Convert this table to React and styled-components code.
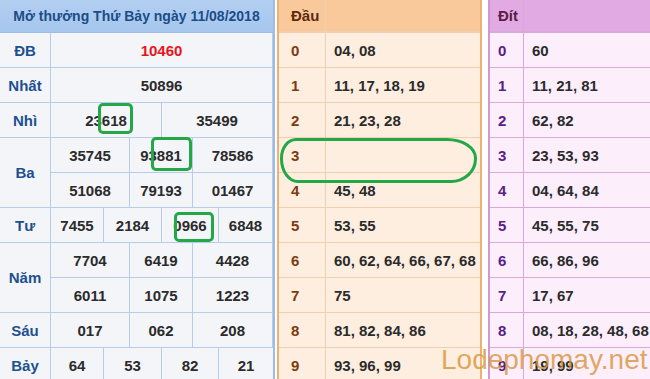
import React from 'react';
import styled, { createGlobalStyle } from 'styled-components';

const GlobalStyle = createGlobalStyle`
  html, body {
    margin: 0;
    padding: 0;
    background: #fff;
  }
  body {
    font-family: "Liberation Sans", Arial, sans-serif;
  }
`;

const prizes = [
  { label: 'ĐB', lines: [['10460']], red: true },
  { label: 'Nhất', lines: [['50896']] },
  { label: 'Nhì', lines: [['23618', '35499']] },
  { label: 'Ba', lines: [['35745', '93881', '78586'], ['51068', '79193', '01467']] },
  { label: 'Tư', lines: [['7455', '2184', '0966', '6848']] },
  { label: 'Năm', lines: [['7704', '6419', '4428'], ['6011', '1075', '1223']] },
  { label: 'Sáu', lines: [['017', '062', '208']] },
  { label: 'Bảy', lines: [['64', '53', '82', '21']] },
];

const spans = {
  1: ['2 / 8'],
  2: ['2 / 5', '5 / 8'],
  3: ['2 / 4', '4 / 6', '6 / 8'],
  4: ['2 / 3', '3 / 5', '5 / 7', '7 / 8'],
};

const dau = ['04, 08', '11, 17, 18, 19', '21, 23, 28', '', '45, 48', '53, 55', '60, 62, 64, 66, 67, 68', '75', '81, 82, 84, 86', '93, 96, 99'];
const dit = ['60', '11, 21, 81', '62, 82', '23, 53, 93', '04, 64, 84', '45, 55, 75', '66, 86, 96', '17, 67', '08, 18, 28, 48, 68', '19, 99'];

function ResultTable() {
  let row = 2;
  const cells = [];
  prizes.forEach((p) => {
    cells.push(
      <Label key={p.label} $row={`${row} / span ${p.lines.length}`}>
        {p.label}
      </Label>
    );
    p.lines.forEach((line, li) => {
      line.forEach((v, i) => {
        cells.push(
          <Value key={`${p.label}-${li}-${i}`} $row={row + li} $col={spans[line.length][i]} $red={p.red}>
            {v}
          </Value>
        );
      });
    });
    row += p.lines.length;
  });

  return (
    <Results>
      <ResultsHead>Mở thưởng Thứ Bảy ngày 11/08/2018</ResultsHead>
      {cells}
    </Results>
  );
}

function StatTable({ title, items, theme }) {
  return (
    <Stat $t={theme}>
      <StatHead $t={theme}>{title}</StatHead>
      <StatHeadRest $t={theme} />
      {items.map((v, i) => (
        <React.Fragment key={i}>
          <Digit $t={theme}>{i}</Digit>
          <Nums $t={theme}>{v}</Nums>
        </React.Fragment>
      ))}
    </Stat>
  );
}

const orange = {
  head: '#f9c99c',
  body: '#fdeee0',
  line: '#f2cfae',
  edge: '#efb172',
  digit: '#7c3b0f',
  title: '#5e2a0c',
  first: '47px',
  pad: '12px',
};

const purple = {
  head: '#e2aae2',
  body: '#fdeefc',
  line: '#d9a9d9',
  edge: '#cf98cf',
  digit: '#5a1d86',
  title: '#5a1c46',
  first: '34px',
  pad: '8px',
};

export default function App() {
  return (
    <>
      <GlobalStyle />
      <Page>
        <ResultTable />
        <StatTable title="Đầu" items={dau} theme={orange} />
        <StatTable title="Đít" items={dit} theme={purple} />

        <Mark $left={98} $top={103} $w={35} $h={31} />
        <Mark $left={151} $top={137} $w={41} $h={34} />
        <Mark $left={174} $top={212} $w={40} $h={30} />
        <Ring />
        <Watermark>Lodephomay.net</Watermark>
      </Page>
    </>
  );
}

const Page = styled.div`
  position: relative;
  width: 650px;
  height: 379px;
  overflow: hidden;
  display: flex;
  align-items: flex-start;
  gap: 2px;
`;

const Results = styled.div`
  flex: none;
  display: grid;
  grid-template-columns: 51px 53px 26px 32px 31px 26px 54px;
  grid-template-rows: 33px repeat(11, 35px);
  border-right: 2px solid #9dbde6;
  background: #f4f5f9;
`;

const ResultsHead = styled.div`
  grid-column: 1 / 8;
  display: flex;
  align-items: center;
  justify-content: center;
  background: linear-gradient(#b2cff1, #a6c6ed);
  color: #1b4d88;
  font-size: 14px;
  font-weight: bold;
  border-bottom: 1px solid #9dbde6;
  white-space: nowrap;
`;

const Cell = styled.div`
  display: flex;
  align-items: center;
  justify-content: center;
  border-bottom: 1px solid #b7cce9;
  font-size: 15px;
  font-weight: bold;
`;

const Label = styled(Cell)`
  grid-column: 1;
  grid-row: ${(p) => p.$row};
  color: #1d508f;
  border-right: 1px solid #b7cce9;
`;

const Value = styled(Cell)`
  grid-column: ${(p) => p.$col};
  grid-row: ${(p) => p.$row};
  color: ${(p) => (p.$red ? '#e8141b' : '#2b2b2b')};
  &:not(:last-child) {
    border-right: 1px solid #b7cce9;
  }
`;

const Stat = styled.div`
  flex: ${(p) => (p.$t === purple ? '1' : 'none')};
  width: ${(p) => (p.$t === purple ? 'auto' : '201px')};
  display: grid;
  grid-template-columns: ${(p) => p.$t.first} 1fr;
  grid-template-rows: 33px repeat(10, 35px);
  background: ${(p) => p.$t.body};
  border-left: 2px solid ${(p) => p.$t.edge};
  border-right: ${(p) => (p.$t === purple ? 'none' : `2px solid ${p.$t.edge}`)};
  margin-left: ${(p) => (p.$t === purple ? '4px' : '0')};
`;

const StatHead = styled.div`
  display: flex;
  align-items: center;
  padding-left: ${(p) => p.$t.pad};
  background: ${(p) => p.$t.head};
  color: ${(p) => p.$t.title};
  font-size: 15px;
  font-weight: bold;
  border-right: 1px solid ${(p) => p.$t.line};
  border-bottom: 2px solid ${(p) => p.$t.line};
`;

const StatHeadRest = styled.div`
  background: ${(p) => p.$t.head};
  border-bottom: 2px solid ${(p) => p.$t.line};
`;

const Digit = styled.div`
  display: flex;
  align-items: center;
  padding-left: ${(p) => p.$t.pad};
  color: ${(p) => p.$t.digit};
  font-size: 15px;
  font-weight: bold;
  border-right: 1px solid ${(p) => p.$t.line};
  border-bottom: 1px solid ${(p) => p.$t.line};
`;

const Nums = styled.div`
  display: flex;
  align-items: center;
  padding-left: 8px;
  color: #2b2b2b;
  font-size: 15px;
  font-weight: bold;
  white-space: nowrap;
  border-bottom: 1px solid ${(p) => p.$t.line};
`;

const Mark = styled.div`
  position: absolute;
  left: ${(p) => p.$left}px;
  top: ${(p) => p.$top}px;
  width: ${(p) => p.$w}px;
  height: ${(p) => p.$h}px;
  box-sizing: border-box;
  border: 3px solid #23a747;
  border-radius: 5px;
`;

const Ring = styled.div`
  position: absolute;
  left: 280px;
  top: 138px;
  width: 197px;
  height: 45px;
  box-sizing: border-box;
  border: 3px solid #23a747;
  border-radius: 16px 30px 26px 18px / 20px 20px 24px 24px;
`;

const Watermark = styled.div`
  position: absolute;
  left: 441px;
  top: 343px;
  font-family: "Liberation Sans", Arial, sans-serif;
  font-size: 28px;
  line-height: 34px;
  color: rgba(214, 148, 58, 0.8);
  white-space: nowrap;
  pointer-events: none;
`;
